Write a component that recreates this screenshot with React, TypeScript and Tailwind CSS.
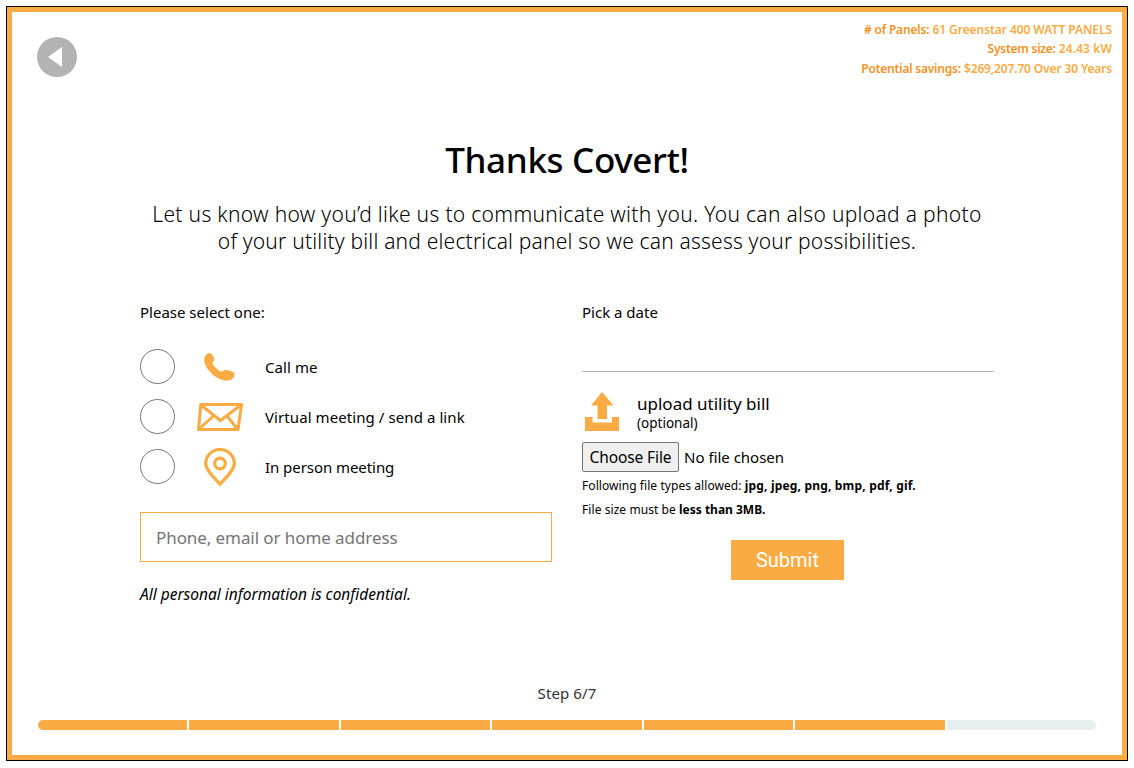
import React from "react";

function PhoneIcon() {
  return (
    <svg width="32" height="30" viewBox="0 0 32 30" fill="#fbab43">
      <path d="M1 4.500C1.800 2.200 4 1 5.800 1c2 .1 4.800 5 4.400 7-.3 1.300-1.900 1.700-1.700 3.100.4 2.600 6 8.200 8.800 8.500 1.700.2 2.300-1.500 3.900-1.700 2.200-.2 8.300 1.300 9.200 3.200.7 1.900-.7 5-3 6.300-3.200 1.800-8.200 1.500-12.400-.6C8.200 23.300.2 15 .2 8.200c0-1.300.3-2.600.8-3.700z" />
    </svg>
  );
}

function MailIcon() {
  return (
    <svg width="48" height="30" viewBox="0 0 48 30" fill="none" stroke="#fbab43" strokeWidth="3">
      <path d="M4.800 2.500H45.500L42 27.500H2.500z" strokeLinejoin="round" />
      <path d="M5 3L24.300 18.500 45 3M3 27L18 13.500M30.500 13.500L41.500 27" />
    </svg>
  );
}

function PinIcon() {
  return (
    <svg width="32" height="38" viewBox="0 0 32 38" fill="none" stroke="#fbab43" strokeWidth="3.200">
      <path d="M16 36.200C11 30.500 1.700 22.500 1.700 15.300a14.300 13.800 0 0 1 28.600 0C30.300 22.500 21 30.500 16 36.200z" strokeLinejoin="round" />
      <circle cx="16" cy="15.500" r="5.300" />
    </svg>
  );
}

function UploadIcon() {
  return (
    <svg width="34" height="39" viewBox="0 0 34 39" fill="#fbab43">
      <path d="M17 0L28.500 13.500H22V27H12.500V13.500H6z" />
      <path d="M0 25H7.500V30.500H27V25H34V39H0z" />
    </svg>
  );
}

const contactOptions = [
  { icon: <PhoneIcon />, label: "Call me", tracking: "tracking-[0.08px]", id: "call" },
  { icon: <MailIcon />, label: "Virtual meeting / send a link", tracking: "tracking-[0.08px]", id: "virtual" },
  { icon: <PinIcon />, label: "In person meeting", tracking: "tracking-[-0.06px]", id: "person" },
];

function ContactOptions() {
  return (
    <div className="mt-[17px] flex flex-col">
      {contactOptions.map((o) => (
        <label key={o.id} className="flex h-[50px] items-center">
          <input type="radio" name="contact" className="h-[35px] w-[35px] shrink-0 appearance-none rounded-full border border-[#767676] bg-white" />
          <span className="ml-[20px] flex w-[50px] justify-center pt-[2px]">{o.icon}</span>
          <span className={`ml-[20px] pt-[2px] text-[15px] ${o.tracking}`}>{o.label}</span>
        </label>
      ))}
    </div>
  );
}

const stats = [
  { name: "# of Panels:", value: "61 Greenstar 400 WATT PANELS", nameTracking: "tracking-[-0.18px]", valueTracking: "tracking-[-0.07px]" },
  { name: "System size:", value: "24.43 kW", nameTracking: "tracking-[-0.25px]", valueTracking: "tracking-[0.1px]" },
  { name: "Potential savings:", value: "$269,207.70 Over 30 Years", nameTracking: "tracking-[-0.22px]", valueTracking: "tracking-[-0.14px]" },
];

function Stats() {
  return (
    <div className="mr-[10px] mt-[7.600px] text-right text-[12px] font-semibold leading-[19.5px] text-[#fbab43]">
      {stats.map((s) => (
        <div key={s.name}>
          <span className={`text-[#f59322] ${s.nameTracking}`}>{s.name}</span> <span className={s.valueTracking}>{s.value}</span>
        </div>
      ))}
    </div>
  );
}

export default function App() {
  return (
    <div className="h-[768px] bg-white p-[6px] font-['Noto_Sans',sans-serif] text-black">
      <div className="h-[755px] w-[1122px] border border-black">
        <div className="flex h-full flex-col border-[5px] border-[#fbab43]">
          <div className="flex h-[120px] shrink-0 items-start justify-between">
            <button className="ml-[25px] mt-[25px] h-[40px] w-[40px]" aria-label="Back">
              <svg width="40" height="40" viewBox="0 0 40 40">
                <circle cx="20" cy="20" r="20" fill="#b3b3b3" />
                <path d="M11 20L25 10V30z" fill="#fff" />
              </svg>
            </button>
            <Stats />
          </div>

          <h1 className="text-center text-[35px] font-medium leading-[56px] tracking-[-0.35px]">Thanks Covert!</h1>
          <p className="mt-[13px] text-center text-[21px] font-light leading-[27px]">
            <span className="tracking-[0.31px]">Let us know how you’d like us to communicate with you. You can also upload a photo</span>
            <br />
            <span className="tracking-[0.19px]">of your utility bill and electrical panel so we can assess your possibilities.</span>
          </p>

          <div className="mx-[128px] mt-[45px] flex gap-[30px]">
            <div className="w-[412px]">
              <div className="text-[15px] leading-[24px]">Please select one:</div>
              <ContactOptions />
              <input
                className="mt-[21px] block h-[50px] w-full border border-[#fbab43] px-[15px] text-[17px] tracking-[-0.08px] placeholder:text-[#757575]"
                placeholder="Phone, email or home address"
              />
              <div className="mt-[20px] text-[15.5px] italic leading-[24px]">All personal information is confidential.</div>
            </div>
            <div className="w-[412px]">
              <div className="text-[15px] leading-[24px]">Pick a date</div>
              <div className="h-[48px] border-b border-[#b3b3b3]" />
              <div className="mt-[20px] flex h-[41px] items-start">
                <span className="ml-[3px]"><UploadIcon /></span>
                <div className="ml-[18px] mt-[1px]">
                  <div className="text-[17px] leading-[22px]">upload utility bill</div>
                  <div className="text-[13.5px] leading-[16px]">(optional)</div>
                </div>
              </div>
              <div className="mt-[9px] flex items-center">
                <button className="h-[30px] w-[97px] whitespace-nowrap rounded-[2px] border border-[#767676] bg-[#efefef] pt-px text-[15.5px] tracking-[-0.1px]">Choose File</button>
                <span className="ml-[5px] text-[15px]">No file chosen</span>
              </div>
              <div className="mt-[2px] text-[12px] leading-[24px]">
                <span className="tracking-[0.07px]">Following file types allowed:</span> <b className="font-bold tracking-[0.18px]">jpg, jpeg, png, bmp, pdf, gif.</b>
                <br />
                <span className="tracking-[0.07px]">File size must be</span> <b className="font-bold">less than 3MB.</b>
              </div>
              <button className="ml-[149px] mt-[18px] block h-[40px] w-[113px] bg-[#fbab43] font-[Roboto] text-[20px] text-white">Submit</button>
            </div>
          </div>

          <div className="mt-auto text-center text-[15px] leading-[24px] tracking-[0.1px] text-[#333]">Step 6/7</div>
          <div className="mx-[26px] mb-[25px] mt-[15px] flex h-[10px] shrink-0 gap-[2px] overflow-hidden rounded-[5px]">
            {[1, 2, 3, 4, 5, 6, 7].map((n) => (
              <div key={n} className={n <= 6 ? "flex-1 bg-[#fbab43]" : "flex-1 bg-[#e7eef0]"} />
            ))}
          </div>
        </div>
      </div>
    </div>
  );
}
